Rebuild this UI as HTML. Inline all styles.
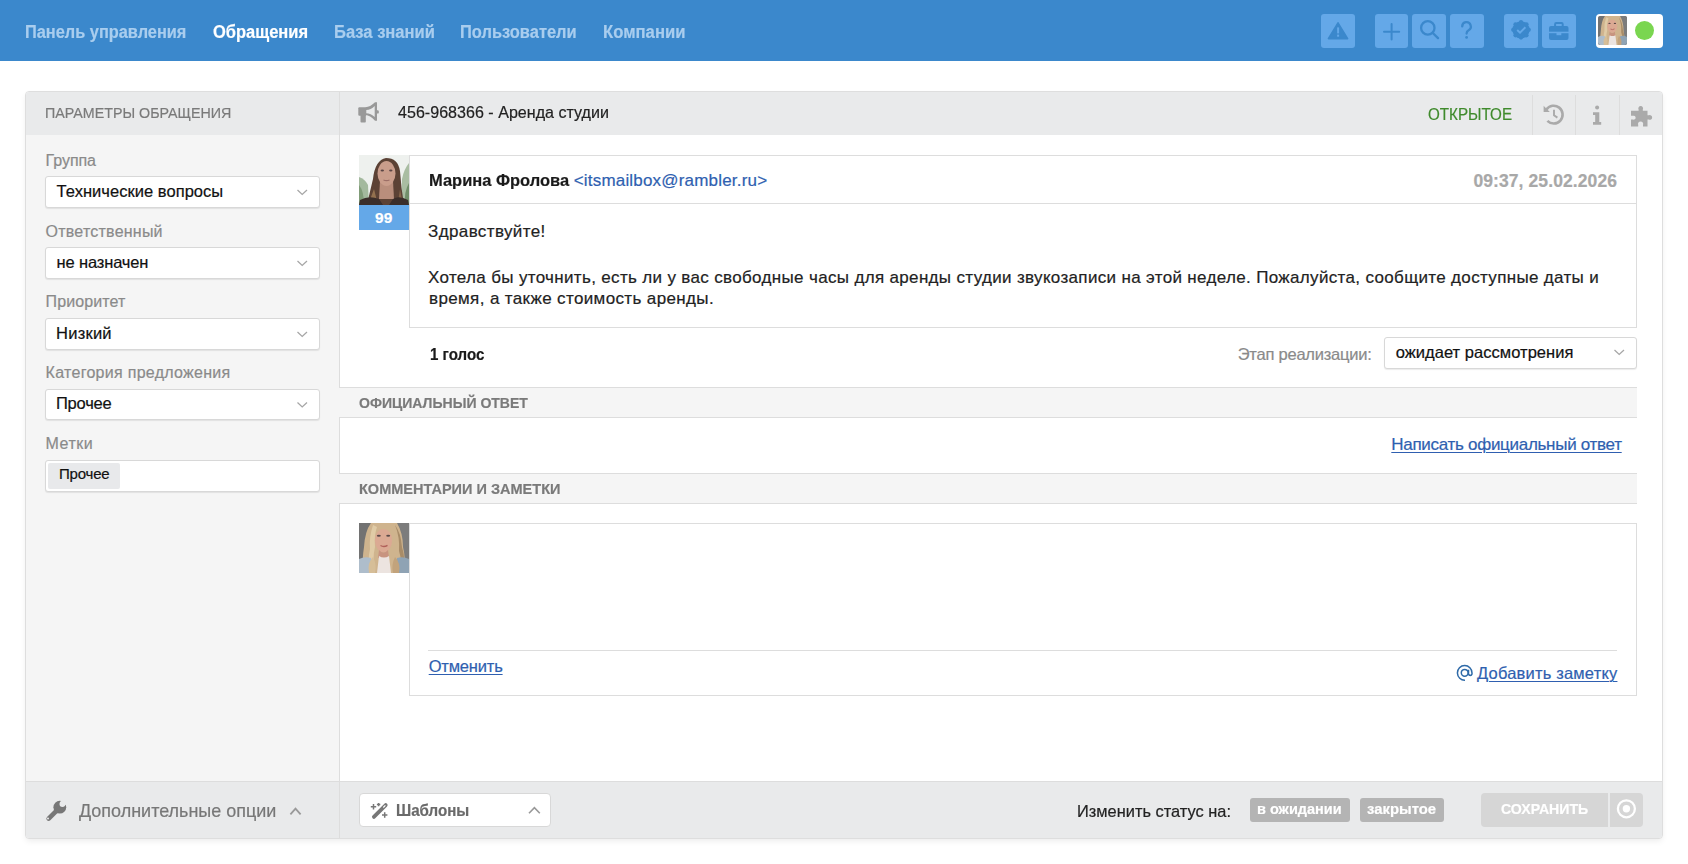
<!DOCTYPE html>
<html><head><meta charset="utf-8"><title>Обращение</title>
<style>
html,body{margin:0;padding:0;}
body{width:1688px;height:864px;position:relative;overflow:hidden;background:#fff;font-family:"Liberation Sans",sans-serif;}
.a{position:absolute;box-sizing:border-box;}
.t{position:absolute;line-height:0;white-space:nowrap;font-family:"Liberation Sans",sans-serif;-webkit-text-stroke:0.2px currentColor;}
.u{text-decoration:underline;text-decoration-thickness:1px;text-underline-offset:2px;}
#hdr{left:0;top:0;width:1688px;height:61px;background:#3b88cc;}
.ib{background:#64a8e8;border-radius:3px;width:34px;height:34px;top:14px;}
#panel{left:25px;top:91px;width:1638px;height:748px;border:1px solid #dedede;border-radius:4px;background:#fff;box-shadow:0 3px 6px -1px rgba(0,0,0,0.08);overflow:hidden;}
.sel{background:#fff;border:1px solid #d8d8d8;border-radius:3px;box-shadow:0 1px 1px rgba(0,0,0,0.08);}
.ln{background:#dddddd;}

</style></head><body>
<div id="hdr" class="a"></div>
<div class="a ib" style="left:1321px"></div>
<div class="a ib" style="left:1375px;width:33px"></div>
<div class="a ib" style="left:1412px"></div>
<div class="a ib" style="left:1450px"></div>
<div class="a ib" style="left:1504px"></div>
<div class="a ib" style="left:1542px"></div>
<div class="a" style="left:1596px;top:14px;width:67px;height:34px;background:#fff;border-radius:4px;"></div>
<div class="a" style="left:1598px;top:16px;width:29px;height:29px;background:#8a8580;border-radius:2px;"></div>
<div class="a" style="left:1635px;top:21px;width:19px;height:19px;background:#7ad650;border-radius:50%;"></div>

<div id="panel" class="a">
  <!-- header bar -->
  <div class="a" style="left:0;top:0;width:1636px;height:43px;background:#e9eaeb;"></div>
  <!-- left column -->
  <div class="a" style="left:0;top:43px;width:313px;height:647px;background:#f5f5f5;"></div>
  <div class="a ln" style="left:313px;top:0;width:1px;height:748px;"></div>
  <!-- header dividers -->
  <div class="a ln" style="left:1506px;top:3px;width:1px;height:40px;"></div>
  <div class="a ln" style="left:1549px;top:3px;width:1px;height:40px;"></div>
  <div class="a ln" style="left:1593px;top:3px;width:1px;height:40px;"></div>
  <!-- bottom bar -->
  <div class="a" style="left:0;top:689px;width:1636px;height:58px;background:#e9eaeb;border-top:1px solid #dddddd;"></div>
  <div class="a ln" style="left:313px;top:689px;width:1px;height:58px;"></div>
</div>

<!-- left selects -->
<div class="a sel" style="left:45px;top:176px;width:275px;height:32px;"></div>
<div class="a sel" style="left:45px;top:247px;width:275px;height:32px;"></div>
<div class="a sel" style="left:45px;top:318px;width:275px;height:32px;"></div>
<div class="a sel" style="left:45px;top:389px;width:275px;height:31px;"></div>
<div class="a sel" style="left:45px;top:460px;width:275px;height:32px;"></div>
<div class="a" style="left:48px;top:463px;width:72px;height:26px;background:#e8e9eb;border-radius:2px;"></div>

<!-- message -->
<div class="a" style="left:359px;top:155px;width:50px;height:50px;background:#9a8a7a;"></div>
<div class="a" style="left:359px;top:205px;width:50px;height:25px;background:#64a8e8;"></div>
<div class="a" style="left:409px;top:155px;width:1228px;height:173px;border:1px solid #dddddd;background:#fff;"></div>
<div class="a ln" style="left:410px;top:203px;width:1226px;height:1px;"></div>
<div class="a sel" style="left:1384px;top:337px;width:253px;height:32px;"></div>

<!-- sections -->
<div class="a" style="left:339px;top:387px;width:1298px;height:31px;background:#f5f5f5;border-top:1px solid #dddddd;border-bottom:1px solid #dddddd;"></div>
<div class="a" style="left:339px;top:473px;width:1298px;height:31px;background:#f5f5f5;border-top:1px solid #dddddd;border-bottom:1px solid #dddddd;"></div>

<!-- comment -->
<div class="a" style="left:359px;top:523px;width:50px;height:50px;background:#8a8580;"></div>
<div class="a" style="left:409px;top:523px;width:1228px;height:173px;border:1px solid #dddddd;background:#fff;"></div>
<div class="a ln" style="left:428px;top:650px;width:1189px;height:1px;"></div>

<!-- bottom controls -->
<div class="a sel" style="left:359px;top:793px;width:192px;height:34px;border-radius:4px;box-shadow:none;"></div>
<div class="a" style="left:1250px;top:798px;width:100px;height:24px;background:#b4b4b4;border-radius:3px;"></div>
<div class="a" style="left:1360px;top:798px;width:84px;height:24px;background:#b4b4b4;border-radius:3px;"></div>
<div class="a" style="left:1481px;top:793px;width:127px;height:34px;background:#d6d6d6;border-radius:4px 0 0 4px;"></div>
<div class="a" style="left:1610px;top:793px;width:33px;height:34px;background:#d6d6d6;border-radius:0 4px 4px 0;"></div>

<svg class="a" style="left:0;top:0;pointer-events:none" width="1688" height="864" viewBox="0 0 1688 864">
<defs>
 <filter id="soft" x="-5%" y="-5%" width="110%" height="110%"><feGaussianBlur stdDeviation="0.6"/></filter>

 <clipPath id="cav1"><rect x="359" y="155" width="50" height="50"/></clipPath>
 <clipPath id="cav2"><rect x="359" y="523" width="50" height="50"/></clipPath>
 <clipPath id="cav3"><rect x="1598" y="16" width="29" height="29" rx="3"/></clipPath>
 <mask id="mwrench"><rect x="40" y="795" width="35" height="35" fill="#fff"/><circle cx="62.4" cy="804" r="2.9" fill="#000"/><path d="M60.4 801.9 L64.5 797.8 L68.6 801.9 L64.5 806 Z" fill="#000"/><circle cx="48" cy="818.4" r="1" fill="#000"/></mask>
 <mask id="mbrief"><rect x="1540" y="15" width="40" height="30" fill="#fff"/><rect x="1549" y="31.7" width="20" height="1.5" fill="#000"/><rect x="1556.5" y="32.5" width="4.8" height="2.7" fill="#000"/></mask>
</defs>
<!-- header icons -->
<path d="M1338 22.8 L1347.6 38.6 L1328.4 38.6 Z" fill="#3b88cc" stroke="#3b88cc" stroke-width="1.6" stroke-linejoin="round"/>
<rect x="1337.1" y="27.4" width="2" height="6" fill="#64a8e8"/>
<rect x="1337.1" y="34.6" width="2" height="2.1" fill="#64a8e8"/>
<path d="M1384 31.8 H1399.2 M1391.6 24 V39.5" stroke="#3b88cc" stroke-width="2" fill="none" stroke-linecap="round"/>
<circle cx="1427.8" cy="27.9" r="6.7" stroke="#3b88cc" stroke-width="2.3" fill="none"/>
<path d="M1432.8 33 L1438 38.1" stroke="#3b88cc" stroke-width="2.4" stroke-linecap="round"/>
<path d="M1462.2 26.4 A4.3 4.3 0 1 1 1468.6 30.2 Q1466.6 31.3 1466.6 33.5" stroke="#3b88cc" stroke-width="2.3" fill="none" stroke-linecap="round"/>
<circle cx="1466.6" cy="37.4" r="1.4" fill="#3b88cc"/>
<g fill="#3b88cc">
 <circle cx="1521" cy="29.8" r="8.6"/>
 <circle cx="1528.80" cy="29.80" r="2.1"/>
 <circle cx="1526.52" cy="35.32" r="2.1"/>
 <circle cx="1521.00" cy="37.60" r="2.1"/>
 <circle cx="1515.48" cy="35.32" r="2.1"/>
 <circle cx="1513.20" cy="29.80" r="2.1"/>
 <circle cx="1515.48" cy="24.28" r="2.1"/>
 <circle cx="1521.00" cy="22.00" r="2.1"/>
 <circle cx="1526.52" cy="24.28" r="2.1"/>
</g>
<path d="M1517.2 30 L1520 32.6 L1525.4 27.3" stroke="#64a8e8" stroke-width="1.9" fill="none"/>
<g mask="url(#mbrief)" fill="#3b88cc">
 <rect x="1549" y="26.1" width="19.5" height="13.9" rx="2"/>
</g>
<path d="M1555.1 26.5 V24.2 Q1555.1 23.1 1556.2 23.1 H1561.6 Q1562.7 23.1 1562.7 24.2 V26.5" stroke="#3b88cc" stroke-width="2" fill="none"/>
<!-- header avatar -->
<g clip-path="url(#cav3)"><svg x="1598" y="16" width="29" height="29" viewBox="0 0 50 50">
 <rect width="50" height="50" fill="#727272"/>
 <rect x="30" width="20" height="50" fill="#7c7c7c"/>
 <path d="M12 0 H38 Q44 10 44 24 Q47 36 45 50 H4 Q3 36 5 24 Q6 8 12 0 Z" fill="#cfb48e"/>
 <path d="M14 2 Q10 14 11 26 Q8 38 12 50 H16 Q13 36 16 24 Q15 12 18 4 Z" fill="#e0cba6"/>
 <path d="M36 2 Q41 14 40 28 Q44 40 40 50 H44 Q47 36 43 24 Q42 10 36 2 Z" fill="#a88c68"/>
 <ellipse cx="24.5" cy="17.5" rx="8.6" ry="11.5" fill="#dba993"/>
 <path d="M20 27 Q24.5 32 29 27 L30 35 H19 Z" fill="#c89480"/>
 <ellipse cx="19.8" cy="12.8" rx="2" ry="1" fill="#5a4a48"/>
 <ellipse cx="29.2" cy="12.8" rx="2" ry="1" fill="#5a4a48"/>
 <path d="M21.5 22.5 Q25 24.5 28.5 22.3" stroke="#b0615a" stroke-width="1.4" fill="none"/>
 <path d="M0 50 V36 Q6 33 12 35 L14 50 Z" fill="#aebdcb"/>
 <path d="M50 50 V36 Q44 33 38 35 L36 50 Z" fill="#8fa3b4"/>
 <path d="M18 50 L20 33 Q25 36 30 33 L32 50 Z" fill="#ece4e0"/>
 <path d="M10 50 Q8 40 14 34 Q18 42 16 50 Z" fill="#d6be98"/>
 <path d="M40 50 Q42 40 36 34 Q32 42 34 50 Z" fill="#c2a37c"/>
</svg></g>
<!-- megaphone -->
<g fill="#999999">
 <rect x="358.3" y="107.2" width="8" height="8.5" rx="1"/>
 <rect x="360.5" y="114" width="5.3" height="8.6" rx="0.8"/>
 <path fill-rule="evenodd" d="M365.5 107.2 Q370 107 375 102.2 L377 102.2 L377 120.7 L375 120.7 Q370 115.2 365.5 115 Z M366 110 L366 113.3 Q371 113.5 374.7 117 L374.7 106 Q371 109.8 366 110 Z"/>
 <rect x="376" y="110.2" width="2.8" height="3.4" rx="1.2"/>
</g>
<!-- history -->
<g stroke="#aaaaaa" fill="none">
 <path d="M1546.4 109.5 A8.9 8.9 0 1 1 1547.4 120.9" stroke-width="2.6"/>
 <path d="M1554 109.8 V115.2 L1557.4 117.6" stroke-width="1.9"/>
</g>
<path d="M1543.6 105.7 L1543.6 112 L1549.8 112 Z" fill="#aaaaaa"/>
<!-- info -->
<g fill="#aaaaaa">
 <circle cx="1597.1" cy="107.6" r="2"/>
 <path d="M1593 112.3 H1599.3 V122 H1601.2 V124.8 H1593 V122 H1595.2 V115 H1593 Z"/>
</g>
<!-- puzzle -->
<path fill="#aaaaaa" d="M1631 110.8 H1638.6 V109.6 A2.4 2.4 0 1 1 1642.8 109.6 V110.8 H1647.5 V115.2 H1648.8 A2.4 2.4 0 1 1 1648.8 119.6 H1647.5 V126.6 H1643 V125 A2.6 2.6 0 1 0 1638.2 125 V126.6 H1631 V119.6 H1633 A2 2 0 1 0 1633 115.8 H1631 Z"/>
<!-- select chevrons -->
<g stroke="#a6a6a6" stroke-width="1.3" fill="none">
 <path d="M297.5 190.1 L302.2 194.4 L307 190.1"/>
 <path d="M297.5 261.1 L302.2 265.4 L307 261.1"/>
 <path d="M297.5 332.1 L302.2 336.4 L307 332.1"/>
 <path d="M297.5 402.6 L302.2 406.9 L307 402.6"/>
 <path d="M1614.5 350.1 L1619.2 354.4 L1624 350.1"/>
</g>
<!-- message avatar -->
<g clip-path="url(#cav1)"><svg x="359" y="155" width="50" height="50" viewBox="0 0 50 50" filter="url(#soft)">
 <rect width="50" height="50" fill="#eef1ee"/>
 <path d="M0 22 Q6 24 9 30 L10 50 H0 Z" fill="#a3b99d"/>
 <path d="M0 30 Q5 36 5 50 H0 Z" fill="#809c78"/>
 <path d="M50 8 Q45 14 43 24 L42 50 H50 Z" fill="#a9bda2"/>
 <path d="M50 28 Q45 36 46 50 H50 Z" fill="#718f6a"/>
 <path d="M8 50 Q11 36 14 24 Q16 5 27 3 Q39 3 41 16 Q42 32 45 50 Z" fill="#5b4236"/>
 <path d="M9 50 Q12 42 15 34 L19 50 Z" fill="#93714f"/>
 <path d="M40 50 Q39 42 41 34 L44 50 Z" fill="#86654a"/>
 <path d="M21 26 H34 L35 44 H20 Z" fill="#b98e7c"/>
 <ellipse cx="27.5" cy="18.5" rx="9" ry="12.5" fill="#c99d8b"/>
 <ellipse cx="23.3" cy="15.5" rx="1.7" ry="0.9" fill="#5a4444"/>
 <ellipse cx="31.8" cy="15.5" rx="1.7" ry="0.9" fill="#5a4444"/>
 <path d="M24.5 25 Q27.5 26.2 30.5 25" stroke="#9c6e66" stroke-width="1.1" fill="none"/>
 <path d="M0 50 L1 45 Q10 40 20 44 L24 50 Z" fill="#3b2d2a"/>
 <path d="M50 50 L49 45 Q40 40 34 44 L30 50 Z" fill="#3b2d2a"/>
</svg></g>
<!-- comment avatar -->
<g clip-path="url(#cav2)"><svg x="359" y="523" width="50" height="50" viewBox="0 0 50 50" filter="url(#soft)">
 <rect width="50" height="50" fill="#727272"/>
 <rect x="30" width="20" height="50" fill="#7c7c7c"/>
 <path d="M12 0 H38 Q44 10 44 24 Q47 36 45 50 H4 Q3 36 5 24 Q6 8 12 0 Z" fill="#cfb48e"/>
 <path d="M14 2 Q10 14 11 26 Q8 38 12 50 H16 Q13 36 16 24 Q15 12 18 4 Z" fill="#e0cba6"/>
 <path d="M36 2 Q41 14 40 28 Q44 40 40 50 H44 Q47 36 43 24 Q42 10 36 2 Z" fill="#a88c68"/>
 <ellipse cx="24.5" cy="17.5" rx="8.6" ry="11.5" fill="#dba993"/>
 <path d="M20 27 Q24.5 32 29 27 L30 35 H19 Z" fill="#c89480"/>
 <ellipse cx="19.8" cy="12.8" rx="2" ry="1" fill="#5a4a48"/>
 <ellipse cx="29.2" cy="12.8" rx="2" ry="1" fill="#5a4a48"/>
 <path d="M21.5 22.5 Q25 24.5 28.5 22.3" stroke="#b0615a" stroke-width="1.4" fill="none"/>
 <path d="M0 50 V36 Q6 33 12 35 L14 50 Z" fill="#aebdcb"/>
 <path d="M50 50 V36 Q44 33 38 35 L36 50 Z" fill="#8fa3b4"/>
 <path d="M18 50 L20 33 Q25 36 30 33 L32 50 Z" fill="#ece4e0"/>
 <path d="M10 50 Q8 40 14 34 Q18 42 16 50 Z" fill="#d6be98"/>
 <path d="M40 50 Q42 40 36 34 Q32 42 34 50 Z" fill="#c2a37c"/>
</svg></g>
<!-- @ icon -->
<g stroke="#2e6aa8" stroke-width="1.5" fill="none">
 <path d="M1465 680.2 A7.3 7.3 0 1 1 1472 673 V674 A1.8 1.8 0 0 1 1468.5 674 V669.8"/>
 <circle cx="1464.7" cy="672.8" r="3.4"/>
</g>
<!-- wrench -->
<g fill="#777777" mask="url(#mwrench)">
 <circle cx="59.8" cy="807.2" r="6.4"/>
 <path d="M55.5 808.5 L47 817 Q45.5 818.8 47 820.3 Q48.5 821.8 50.3 820.3 L58.8 811.8 Z"/>
</g>
<!-- chevron up bottom -->
<path d="M290.4 814.3 L295.5 808.6 L300.6 814.3" stroke="#999999" stroke-width="1.8" fill="none"/>
<!-- wand -->
<path d="M373.9 816.9 L385.7 805.1" stroke="#777777" stroke-width="3.8" stroke-linecap="round"/>
<path d="M383.3 807.5 L385.4 805.4" stroke="#ffffff" stroke-width="1.1"/>
<g stroke="#777777" stroke-width="1.5" fill="none">
 <path d="M370.8 806.7 H376.2 M373.5 804 V809.4"/>
 <path d="M376.9 804.6 H380.3 M378.6 802.9 V806.3"/>
 <path d="M382 815 H387.4 M384.7 812.3 V817.7"/>
</g>
<!-- templates chevron up -->
<path d="M529 813.2 L534.4 807.6 L539.8 813.2" stroke="#999999" stroke-width="1.6" fill="none"/>
<!-- circle dot -->
<circle cx="1626.4" cy="808.8" r="8.5" stroke="#ffffff" stroke-width="2.3" fill="none"/>
<circle cx="1626.4" cy="808.8" r="3.7" fill="#ffffff"/>
</svg>


<div id="t0" class="t" style="left:25.30px;top:32.10px;font-size:18px;color:#a9cdee;font-weight:bold;transform:scaleX(0.9083);transform-origin:0.00px 0;">Панель управления</div>
<div id="t1" class="t" style="left:212.80px;top:32.10px;font-size:18px;color:#ffffff;font-weight:bold;transform:scaleX(0.9162);transform-origin:0.00px 0;">Обращения</div>
<div id="t2" class="t" style="left:333.50px;top:32.10px;font-size:18px;color:#a9cdee;font-weight:bold;transform:scaleX(0.9198);transform-origin:0.00px 0;">База знаний</div>
<div id="t3" class="t" style="left:460.00px;top:32.10px;font-size:18px;color:#a9cdee;font-weight:bold;transform:scaleX(0.9138);transform-origin:0.00px 0;">Пользователи</div>
<div id="t4" class="t" style="left:602.50px;top:32.10px;font-size:18px;color:#a9cdee;font-weight:bold;transform:scaleX(0.9280);transform-origin:0.00px 0;">Компании</div>
<div id="t5" class="t sx" style="left:45.20px;top:112.60px;font-size:15.5px;color:#7a7a7a;transform:scaleX(0.9205);transform-origin:0.00px 0;">ПАРАМЕТРЫ ОБРАЩЕНИЯ</div>
<div id="t6" class="t" style="left:397.70px;top:112.50px;font-size:17px;color:#222222;transform:scaleX(0.9462);transform-origin:0.00px 0;">456-968366 - Аренда студии</div>
<div id="t7" class="t sx" style="left:1428.40px;top:113.90px;font-size:16.5px;color:#3f8a2c;transform:scaleX(0.9200);transform-origin:0.00px 0;">ОТКРЫТОЕ</div>
<div id="t8" class="t" style="left:45.60px;top:160.50px;font-size:16px;color:#8a8a8a;letter-spacing:-0.060px;">Группа</div>
<div id="t9" class="t" style="left:56.60px;top:191.00px;font-size:16.5px;color:#111111;letter-spacing:0.039px;">Технические вопросы</div>
<div id="t10" class="t" style="left:45.60px;top:231.50px;font-size:16px;color:#8a8a8a;letter-spacing:0.225px;">Ответственный</div>
<div id="t11" class="t" style="left:56.60px;top:261.60px;font-size:16.5px;color:#111111;letter-spacing:-0.150px;">не назначен</div>
<div id="t12" class="t" style="left:45.60px;top:301.90px;font-size:16px;color:#8a8a8a;letter-spacing:0.100px;">Приоритет</div>
<div id="t13" class="t" style="left:56.10px;top:332.50px;font-size:16.5px;color:#111111;letter-spacing:0.220px;">Низкий</div>
<div id="t14" class="t" style="left:45.60px;top:372.80px;font-size:16px;color:#8a8a8a;letter-spacing:0.285px;">Категория предложения</div>
<div id="t15" class="t" style="left:56.00px;top:403.40px;font-size:16.5px;color:#111111;letter-spacing:-0.240px;">Прочее</div>
<div id="t16" class="t" style="left:45.60px;top:443.70px;font-size:16px;color:#8a8a8a;letter-spacing:0.500px;">Метки</div>
<div id="t17" class="t" style="left:59.00px;top:473.50px;font-size:15px;color:#111111;letter-spacing:-0.200px;">Прочее</div>
<div id="t18" class="t" style="left:428.70px;top:181.20px;font-size:17px;color:#1a1a1a;font-weight:bold;transform:scaleX(0.9689);transform-origin:0.00px 0;">Марина Фролова</div>
<div id="t19" class="t" style="left:573.70px;top:181.20px;font-size:17px;color:#2f5fb0;letter-spacing:0.191px;">&lt;itsmailbox@rambler.ru&gt;</div>
<div id="t20" class="t" style="left:1473.40px;top:180.80px;font-size:17.5px;color:#a8a8a8;font-weight:bold;letter-spacing:0.094px;">09:37, 25.02.2026</div>
<div id="t21" class="t" style="left:428.00px;top:232.20px;font-size:17px;color:#222222;letter-spacing:0.383px;">Здравствуйте!</div>
<div id="t22" class="t" style="left:428.00px;top:277.50px;font-size:17px;color:#222222;letter-spacing:0.339px;">Хотела бы уточнить, есть ли у вас свободные часы для аренды студии звукозаписи на этой неделе. Пожалуйста, сообщите доступные даты и</div>
<div id="t23" class="t" style="left:429.00px;top:299.30px;font-size:17px;color:#222222;letter-spacing:0.371px;">время, а также стоимость аренды.</div>
<div id="t24" class="t" style="left:429.70px;top:354.90px;font-size:16px;color:#1a1a1a;font-weight:bold;transform:scaleX(0.9427);transform-origin:0.00px 0;">1 голос</div>
<div id="t25" class="t" style="left:1237.70px;top:354.40px;font-size:16.5px;color:#8a8a8a;letter-spacing:-0.227px;">Этап реализации:</div>
<div id="t26" class="t" style="left:1395.70px;top:352.40px;font-size:16.5px;color:#111111;letter-spacing:0.037px;">ожидает рассмотрения</div>
<div id="t27" class="t sx" style="left:358.80px;top:402.90px;font-size:15.5px;color:#7a7a7a;font-weight:bold;transform:scaleX(0.9051);transform-origin:0.00px 0;">ОФИЦИАЛЬНЫЙ ОТВЕТ</div>
<div id="t28" class="t sx" style="left:359.00px;top:488.50px;font-size:15.5px;color:#7a7a7a;font-weight:bold;transform:scaleX(0.9363);transform-origin:0.00px 0;">КОММЕНТАРИИ И ЗАМЕТКИ</div>
<div id="t29" class="t u" style="left:1391.30px;top:445.30px;font-size:17px;color:#2f5fb0;letter-spacing:-0.292px;">Написать официальный ответ</div>
<div id="t30" class="t u" style="left:428.70px;top:665.60px;font-size:16.5px;color:#2f5fb0;letter-spacing:-0.186px;">Отменить</div>
<div id="t31" class="t u" style="left:1477.00px;top:673.30px;font-size:16.5px;color:#2f5fb0;letter-spacing:0.187px;">Добавить заметку</div>
<div id="t32" class="t" style="left:78.80px;top:810.80px;font-size:18.5px;color:#777777;transform:scaleX(0.9715);transform-origin:0.00px 0;">Дополнительные опции</div>
<div id="t33" class="t" style="left:396.30px;top:811.10px;font-size:16px;color:#6a6a6a;font-weight:bold;transform:scaleX(0.9445);transform-origin:0.00px 0;">Шаблоны</div>
<div id="t34" class="t" style="left:1077.30px;top:811.80px;font-size:17px;color:#222222;transform:scaleX(0.9643);transform-origin:0.00px 0;">Изменить статус на:</div>
<div id="t35" class="t" style="left:1257.30px;top:808.70px;font-size:15.5px;color:#ffffff;font-weight:bold;transform:scaleX(0.9359);transform-origin:0.00px 0;">в ожидании</div>
<div id="t36" class="t" style="left:1367.00px;top:808.70px;font-size:15.5px;color:#ffffff;font-weight:bold;transform:scaleX(0.9584);transform-origin:0.00px 0;">закрытое</div>
<div id="t37" class="t sx" style="left:1501.00px;top:809.40px;font-size:15px;color:#ffffff;font-weight:bold;transform:scaleX(0.9417);transform-origin:0.00px 0;">СОХРАНИТЬ</div>
<div id="t38" class="t" style="left:374.90px;top:218.30px;font-size:15.5px;color:#ffffff;font-weight:bold;letter-spacing:0.200px;">99</div>
</body></html>
